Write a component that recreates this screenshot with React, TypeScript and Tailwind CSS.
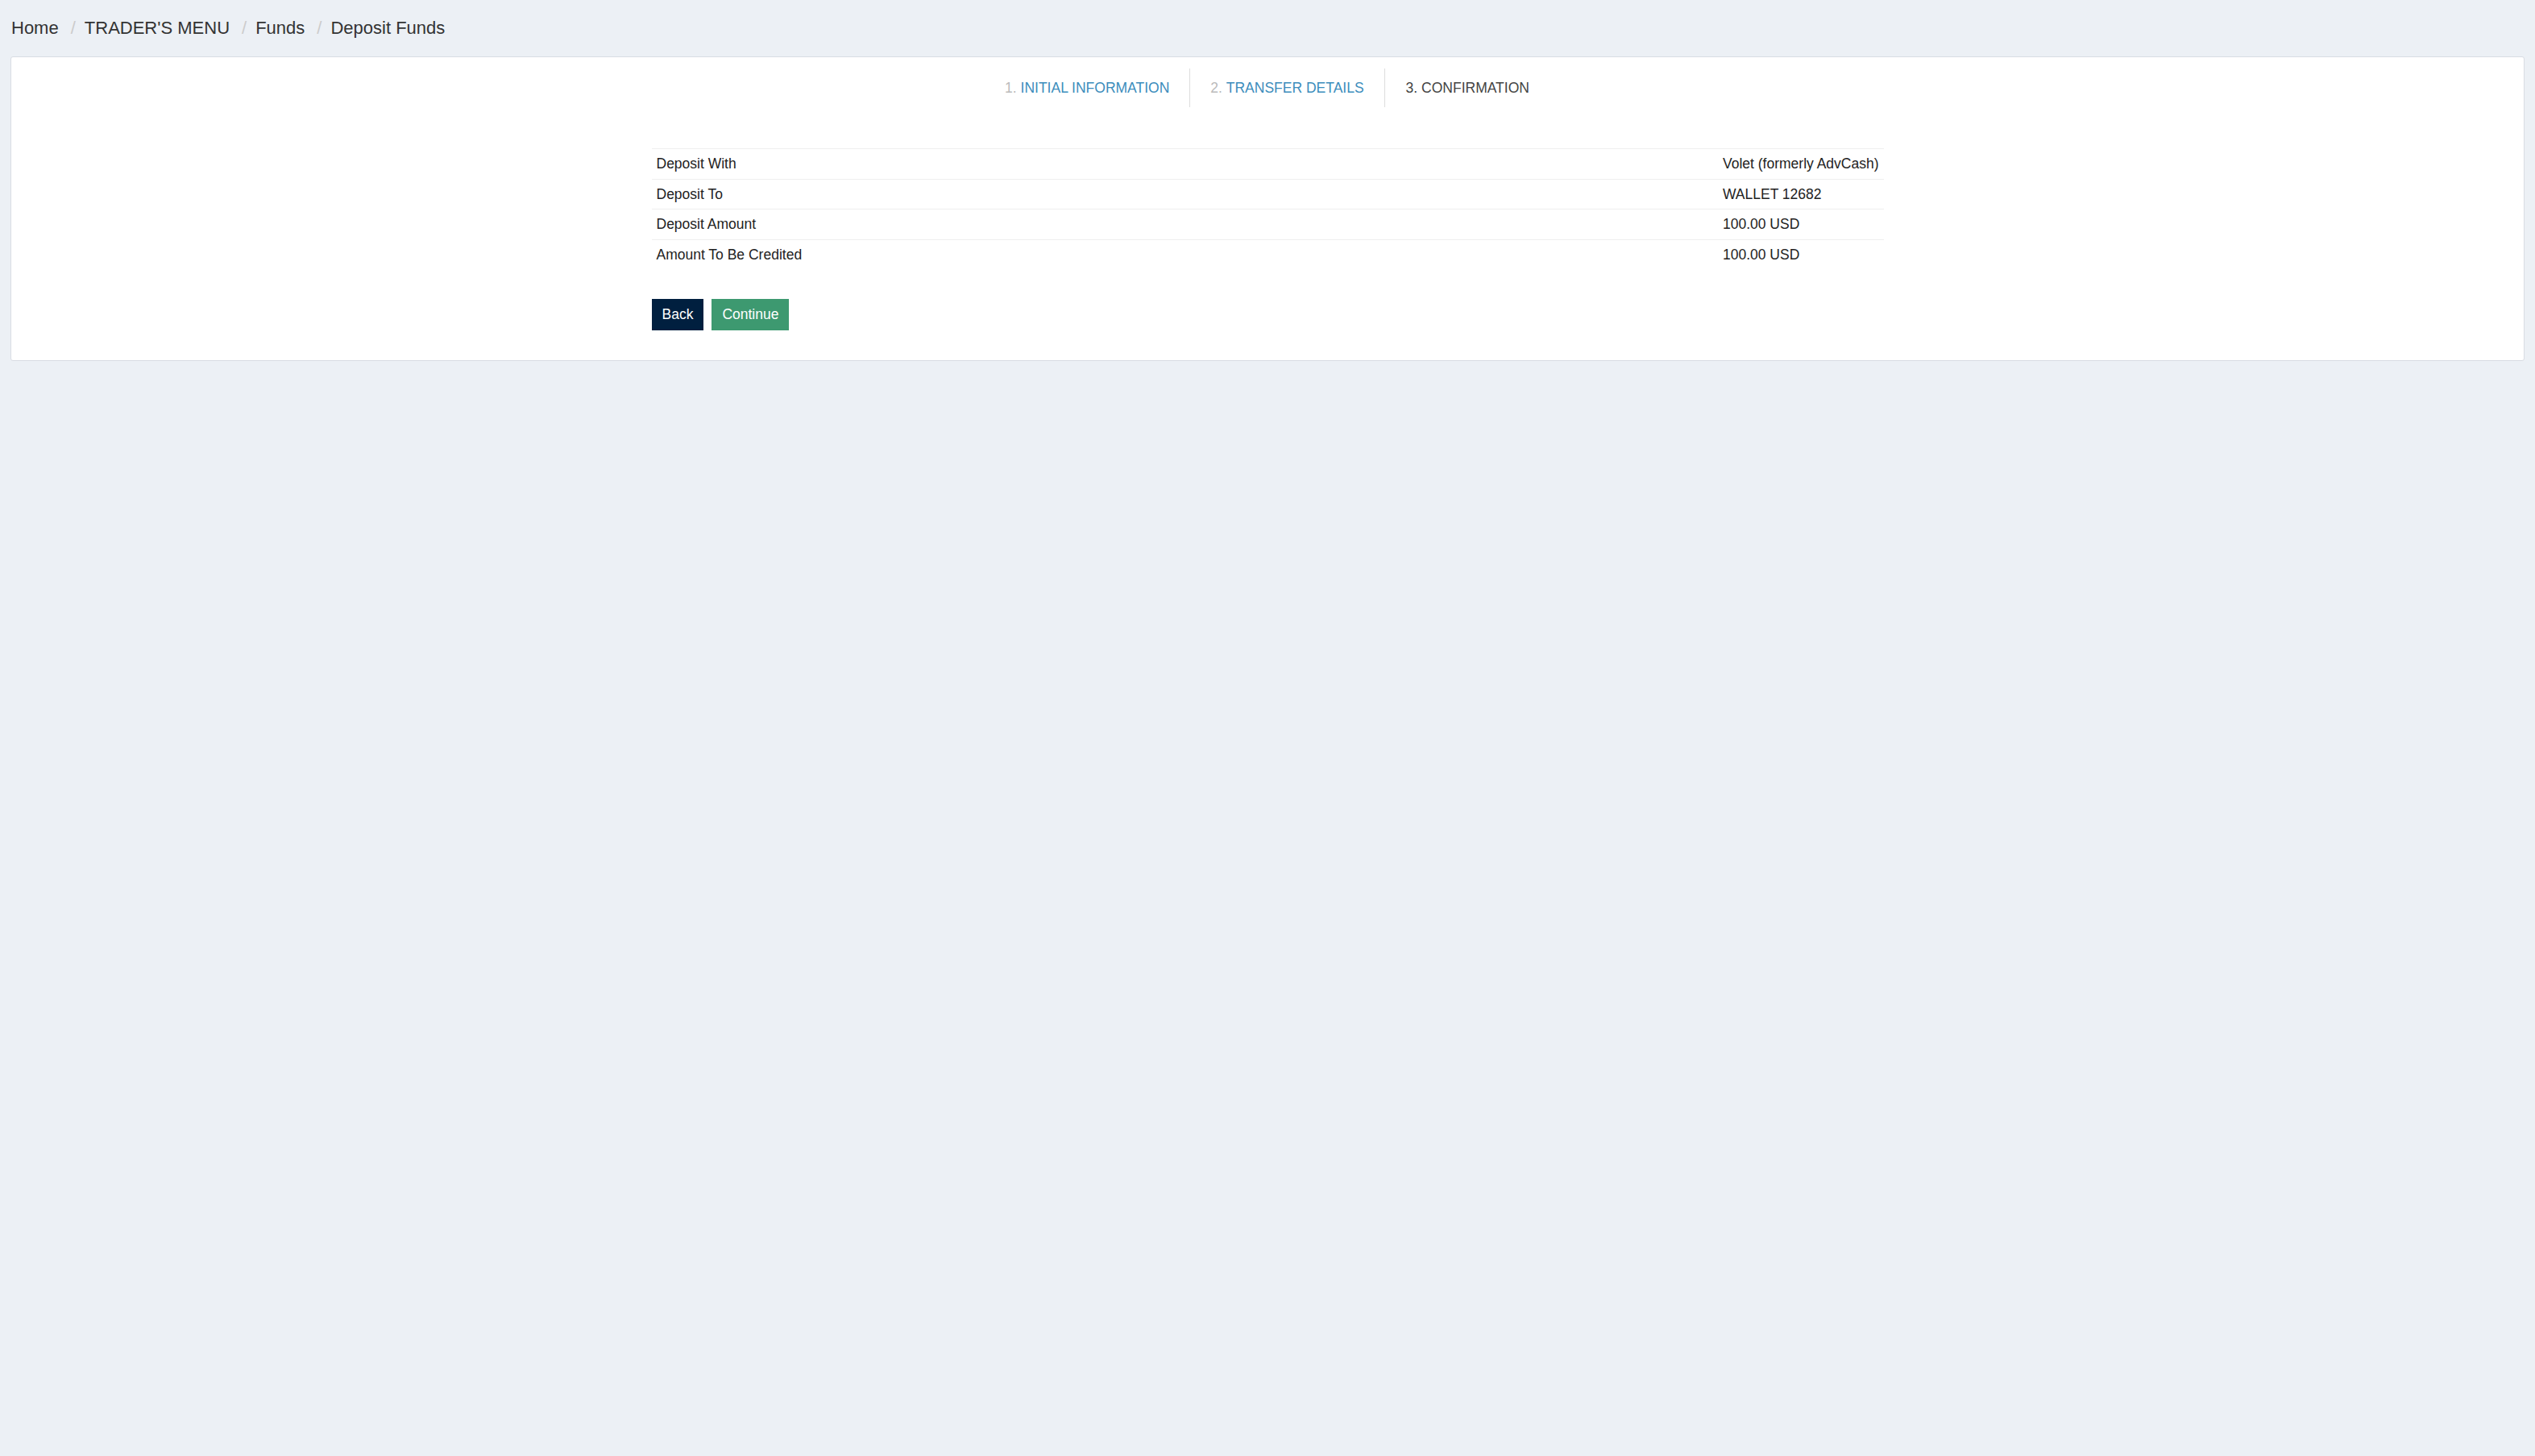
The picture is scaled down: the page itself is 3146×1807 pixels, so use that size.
import React from 'react';

const rows = [
    { label: 'Deposit With', value: 'Volet (formerly AdvCash)' },
    { label: 'Deposit To', value: 'WALLET 12682' },
    { label: 'Deposit Amount', value: '100.00 USD' },
    { label: 'Amount To Be Credited', value: '100.00 USD' },
];

const crumbs = ['Home', "TRADER'S MENU", 'Funds', 'Deposit Funds'];

export default function App() {
    return (
        <div className="min-h-screen bg-[#ecf0f5] text-[#333] font-['Liberation_Sans',Arial,sans-serif]">
            {/* breadcrumb */}
            <div className="h-[70px] pt-[21px] pl-[14px] flex items-start text-[22px] leading-[28px] text-[#333]">
                {crumbs.map((c, i) => (
                    <React.Fragment key={c}>
                        {i > 0 && <span className="ml-[15px] mr-[11px] text-[#ccc]">/</span>}
                        <span>{c}</span>
                    </React.Fragment>
                ))}
            </div>

            <div className="mx-[13px] bg-white border border-[#d8dce3] rounded-[3px] pt-[14px] pb-[37px]">
                {/* steps */}
                <div className="flex justify-center text-[17.5px]">
                    <div className="h-[48px] flex items-center px-[25px]">
                        <span className="text-[#bbb]">1.&nbsp;</span>
                        <span className="text-[#3c8dbc]">INITIAL INFORMATION</span>
                    </div>
                    <div className="h-[48px] flex items-center px-[25px] border-l border-[#ddd]">
                        <span className="text-[#bbb]">2.&nbsp;</span>
                        <span className="text-[#3c8dbc]">TRANSFER DETAILS</span>
                    </div>
                    <div className="h-[48px] flex items-center px-[26px] border-l border-[#ddd] text-[#444]">
                        3. CONFIRMATION
                    </div>
                </div>

                <div className="w-[1529px] mx-auto mt-[51px]">
                    <div className="grid grid-cols-[1fr_auto] text-[17.5px] text-[#222]">
                        {rows.map((r) => (
                            <React.Fragment key={r.label}>
                                <div className="border-t border-[#efefef] px-[6px] py-[6px] leading-[24.5px]">{r.label}</div>
                                <div className="border-t border-[#efefef] px-[6px] py-[6px] leading-[24.5px]">{r.value}</div>
                            </React.Fragment>
                        ))}
                    </div>

                    <div className="flex gap-[10px] mt-[37px]">
                        <button className="h-[39px] px-[13px] bg-[#001f3f] text-white text-[17.5px]">Back</button>
                        <button className="h-[39px] px-[13px] bg-[#3d9970] text-white text-[17.5px]">Continue</button>
                    </div>
                </div>
            </div>
        </div>
    );
}
